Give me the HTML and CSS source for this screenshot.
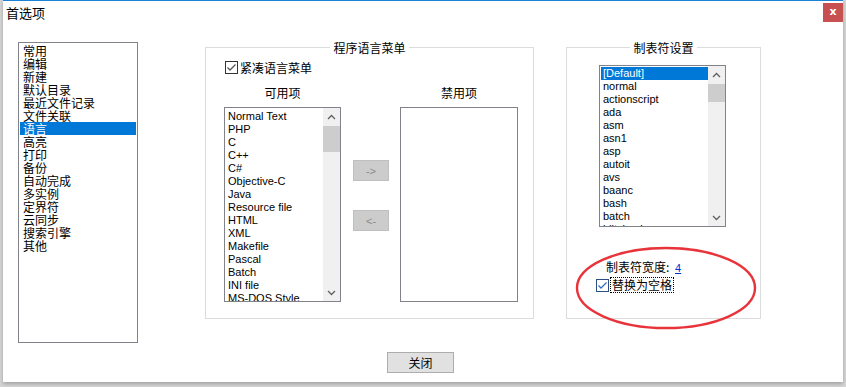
FILE: index.html
```html
<!DOCTYPE html>
<html>
	<head>
		<link rel="stylesheet" href="styles.css">
	</head>
	<body>

	<div class="window">
		<div class="titlebar">
			<span class="title">首选项</span>
			<span class="close">x</span>
		</div>

		<div class="content">
			<ul class="listbox cats">
				<li>常用</li>
				<li>编辑</li>
				<li>新建</li>
				<li>默认目录</li>
				<li>最近文件记录</li>
				<li>文件关联</li>
				<li class="selected">语言</li>
				<li>高亮</li>
				<li>打印</li>
				<li>备份</li>
				<li>自动完成</li>
				<li>多实例</li>
				<li>定界符</li>
				<li>云同步</li>
				<li>搜索引擎</li>
				<li>其他</li>
			</ul>

			<fieldset class="group langs">
				<legend>程序语言菜单</legend>
				<div class="group-body">
					<label class="check compact">
						<span class="box"><svg width="11" height="11" viewBox="0 0 11 11"><polyline points="1.5,5.5 4,8 9.5,2.5" fill="none" stroke="#555" stroke-width="1.3"/></svg></span>
						紧凑语言菜单
					</label>
					<div class="columns">
						<div class="col">
							<div class="col-title">可用项</div>
							<div class="listbox langlist">
								<ul class="items">
									<li>Normal Text</li>
									<li>PHP</li>
									<li>C</li>
									<li>C++</li>
									<li>C#</li>
									<li>Objective-C</li>
									<li>Java</li>
									<li>Resource file</li>
									<li>HTML</li>
									<li>XML</li>
									<li>Makefile</li>
									<li>Pascal</li>
									<li>Batch</li>
									<li>INI file</li>
									<li>MS-DOS Style</li>
								</ul>
								<div class="scrollbar">
									<span class="arrow"><svg width="9" height="6" viewBox="0 0 9 6"><polyline points="1,5 4.5,1.5 8,5" fill="none" stroke="#606060" stroke-width="1.3"/></svg></span>
									<span class="thumb thumb-lang"></span>
									<span class="track"></span>
									<span class="arrow"><svg width="9" height="6" viewBox="0 0 9 6"><polyline points="1,1 4.5,4.5 8,1" fill="none" stroke="#606060" stroke-width="1.3"/></svg></span>
								</div>
							</div>
						</div>
						<div class="movers">
							<button class="move">-&gt;</button>
							<button class="move">&lt;-</button>
						</div>
						<div class="col">
							<div class="col-title">禁用项</div>
							<div class="listbox disabled-list"></div>
						</div>
					</div>
				</div>
			</fieldset>

			<fieldset class="group tabs">
				<legend>制表符设置</legend>
				<div class="group-body">
					<div class="listbox tablist">
						<ul class="items">
							<li class="selected">[Default]</li>
							<li>normal</li>
							<li>actionscript</li>
							<li>ada</li>
							<li>asm</li>
							<li>asn1</li>
							<li>asp</li>
							<li>autoit</li>
							<li>avs</li>
							<li>baanc</li>
							<li>bash</li>
							<li>batch</li>
							<li>blitzbasic</li>
						</ul>
						<div class="scrollbar">
							<span class="arrow"><svg width="9" height="6" viewBox="0 0 9 6"><polyline points="1,5 4.5,1.5 8,5" fill="none" stroke="#606060" stroke-width="1.3"/></svg></span>
							<span class="thumb thumb-tab"></span>
							<span class="track"></span>
							<span class="arrow"><svg width="9" height="6" viewBox="0 0 9 6"><polyline points="1,1 4.5,4.5 8,1" fill="none" stroke="#606060" stroke-width="1.3"/></svg></span>
						</div>
					</div>
					<div class="tabwidth">制表符宽度: <a href="#">4</a></div>
					<label class="check replace">
						<span class="box focus"><svg width="11" height="11" viewBox="0 0 11 11"><polyline points="1.5,5.5 4,8 9.5,2.5" fill="none" stroke="#2f6fbf" stroke-width="1.3"/></svg></span>
						<span class="focused">替换为空格</span>
					</label>
				</div>
			</fieldset>
		</div>

		<div class="footer">
			<button class="btn">关闭</button>
		</div>
	</div>

	<svg class="mark" width="184" height="86" viewBox="0 0 184 86"><ellipse cx="92" cy="43" rx="89" ry="40" fill="none" stroke="#e8333a" stroke-width="2.4"/></svg>

	</body>
</html>
```

FILE: styles.css
```css
body{
	margin: 0;
	background: #d6d6d6;
	font-family: "Liberation Sans", "Noto Sans CJK SC", sans-serif;
	font-size: 12px;
	line-height: 13px;
	color: #000;
	position: relative;
	width: 846px;
	height: 387px;
	overflow: hidden;
}

ul{
	list-style: none;
	margin: 0;
	padding: 0;
}

.window{
	margin-left: 3px;
	width: 840px;
	height: 382px;
	background: #fff;
	border-top: 1px solid #1883d7;
	box-sizing: border-box;
	box-shadow: 0 2px 4px rgba(0, 0, 0, 0.25);
}

.titlebar{
	height: 30px;
	display: flex;
	justify-content: space-between;
	align-items: flex-start;
}
.titlebar .title{
	font-size: 13px;
	margin: 5px 0 0 3px;
	font-family: "Noto Sans CJK SC", sans-serif;
}
.titlebar .close{
	width: 20px;
	height: 19px;
	margin-top: 2px;
	background: #c75050;
	color: #fff;
	font-weight: bold;
	font-size: 11px;
	line-height: 18px;
	text-align: center;
	font-family: "DejaVu Sans", sans-serif;
}

.content{
	display: flex;
	align-items: flex-start;
	padding: 11px 0 0 15px;
}

.listbox{
	border: 1px solid #82828b;
	box-sizing: border-box;
	background: #fff;
	overflow: hidden;
}

.cats{
	width: 120px;
	height: 301px;
	padding: 1px;
	font-family: "Noto Sans CJK SC", sans-serif;
}
.cats li{
	height: 13px;
	padding-left: 3px;
	line-height: 13px;
}
.cats li.selected, .tablist li.selected{
	background: #0078d7;
	color: #fff;
}

.group{
	margin: -1px 0 0 0;
	padding: 0;
	border: 1px solid #dcdcdc;
	min-width: 0;
	box-sizing: border-box;
	height: 278px;
}
.group legend{
	margin: 0 auto;
	padding: 0 3px;
	font-family: "Noto Sans CJK SC", sans-serif;
	line-height: 13px;
}

.langs{
	margin-left: 67px;
	width: 329px;
}
.langs .group-body{
	padding-left: 18px;
}
.tabs{
	margin-left: 32px;
	width: 195px;
}
.tabs .group-body{
	padding-left: 32px;
}

.check{
	display: flex;
	align-items: center;
	height: 14px;
	font-family: "Noto Sans CJK SC", sans-serif;
}
.check .box{
	width: 13px;
	height: 13px;
	border: 1px solid #333;
	box-sizing: border-box;
	display: flex;
	align-items: center;
	justify-content: center;
	margin-right: 2px;
}
.check .box.focus{
	border-color: #2b4f7e;
}
.compact{
	margin: 6px 0 0 1px;
}

.columns{
	display: flex;
	align-items: flex-start;
	margin-top: 12px;
}
.col-title{
	text-align: center;
	height: 13px;
	margin-bottom: 8px;
	font-family: "Noto Sans CJK SC", sans-serif;
}
.langlist{
	width: 117px;
	height: 195px;
	display: flex;
}
.items{
	flex: 1;
	padding: 2px 0 0 2px;
	font-size: 11px;
	overflow: hidden;
}
.items li{
	height: 13px;
	line-height: 13px;
	white-space: nowrap;
	padding-left: 1px;
}

.scrollbar{
	width: 17px;
	display: flex;
	flex-direction: column;
	background: #f0f0f0;
}
.scrollbar .arrow{
	height: 17px;
	display: flex;
	align-items: center;
	justify-content: center;
	flex: none;
}
.scrollbar .thumb{
	background: #cdcdcd;
	flex: none;
	margin-top: 1px;
}
.thumb-lang{
	height: 26px;
}
.thumb-tab{
	height: 18px;
}
.scrollbar .track{
	flex: 1;
}

.movers{
	width: 36px;
	margin: 74px 11px 0 12px;
	display: flex;
	flex-direction: column;
	gap: 29px;
}
.move{
	width: 36px;
	height: 21px;
	background: #cccccc;
	border: 1px solid #bfbfbf;
	color: #8a8a8a;
	font-family: "Liberation Sans", sans-serif;
	font-size: 11px;
	padding: 0;
}

.disabled-list{
	width: 118px;
	height: 195px;
}

.tablist{
	width: 127px;
	height: 162px;
	margin-top: 11px;
	display: flex;
}
.tablist .items{
	padding: 1px 0 0 1px;
}
.tablist li{
	padding-left: 2px;
}

.tabwidth{
	margin: 33px 0 0 7px;
	font-family: "Noto Sans CJK SC", sans-serif;
	height: 13px;
}
.tabwidth a{
	color: #0033cc;
	font-family: "Liberation Sans", sans-serif;
	font-size: 11px;
	margin-left: 3px;
}

.replace{
	margin: 5px 0 0 -3px;
}
.replace .focused{
	outline: 1px dotted #000;
	padding: 0 1px;
	line-height: 14px;
}

.footer{
	padding: 9px 0 0 384px;
}
.btn{
	width: 67px;
	height: 21px;
	background: #e1e1e1;
	border: 1px solid #adadad;
	font-family: "Noto Sans CJK SC", sans-serif;
	font-size: 12px;
	padding: 0;
	color: #000;
}

.mark{
	position: absolute;
	left: 574px;
	top: 245px;
}
```
